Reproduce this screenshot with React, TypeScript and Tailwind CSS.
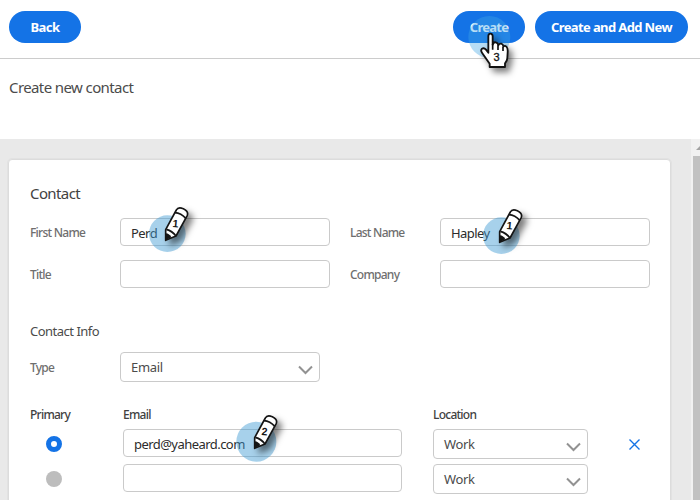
import React from "react";

type Box = { className?: string; children?: React.ReactNode };

function Label({ className = "text-[#6e6e6e]", children }: Box) {
  return (
    <span className={`relative top-px text-[12px] leading-4 font-medium tracking-[-0.75px] whitespace-nowrap ${className}`}>
      {children}
    </span>
  );
}

function Field({ className = "", children }: Box) {
  return (
    <div className={`flex h-7 items-center rounded border border-[#cacaca] bg-white pt-[3px] pl-[10px] text-[13px] tracking-[-0.55px] whitespace-nowrap text-[#2c2c2c] ${className}`}>
      {children}
    </div>
  );
}

function Select({ className = "", children }: Box) {
  return (
    <div className={`flex h-[30px] items-center justify-between rounded border border-[#cacaca] bg-white pr-[6px] pl-[10px] text-[13px] tracking-[-0.35px] text-[#4b4b4b] ${className}`}>
      <span className="pt-[2px]">{children}</span>
      <svg className="mt-[5px] h-[10px] w-[15px]" viewBox="0 0 15 10" fill="none" stroke="#929292" strokeWidth="2">
        <path d="M1 1.5 7.5 8 14 1.5" />
      </svg>
    </div>
  );
}

function Pencil({ n, r = 55, className }: { n: string; r?: number; className: string }) {
  return (
    <svg className={`absolute h-[70px] w-[70px] overflow-visible ${className}`} viewBox="0 0 210 210">
      <circle cx="55" cy="101" r={r} fill="#3c98d2" fillOpacity=".45" />
      <g className="drop-shadow-[14px_14px_9px_rgba(0,0,0,.5)]">
        <path d="M50 121 50 89 82 30Q87 20 103 26 119 33 115 46L81 108Z" fill="#fff" stroke="#151515" strokeWidth="5" strokeLinejoin="round" />
        <path d="M78 38Q96 39 111 56M52 88Q70 93 81 108" fill="none" stroke="#151515" strokeWidth="5" />
        <path d="M50 121 50 100Q62 101 67 112Z" fill="#151515" />
      </g>
      <text x="80" y="82" textAnchor="middle" fontSize="32" fontWeight="700" fill="#151515" transform="rotate(5 80 70)" className="font-['Liberation_Sans',sans-serif]">{n}</text>
    </svg>
  );
}

function Pointer() {
  return (
    <svg className="absolute top-0 left-[440px] h-[110px] w-[100px] overflow-visible" viewBox="0 0 300 330">
      <circle cx="148" cy="111" r="63" fill="#3fa6e4" fillOpacity=".38" />
      <g className="drop-shadow-[12px_13px_9px_rgba(0,0,0,.5)]">
        <path d="M151 101Q158 101 158 109V134Q160 126 167 127 174 128 175 136 178 130 184 131 190 133 190 140 195 135 200 141 204 146 203 157L202 174Q202 182 195 190V201H149V191L126 158Q121 151 126 146 132 142 138 149L145 158V109Q145 101 151 101Z" fill="#fff" stroke="#111" strokeWidth="5.5" strokeLinejoin="round" />
        <path d="M158 132V149M174 136V150M189 141V153" stroke="#111" strokeWidth="5" />
      </g>
      <text x="170" y="184" textAnchor="middle" fontSize="33" fill="#111" stroke="#111" strokeWidth="1" className="font-['Liberation_Sans',sans-serif]">3</text>
    </svg>
  );
}

function Pill({ className = "", children }: Box) {
  return (
    <button className={`flex h-8 items-center justify-center rounded-full bg-[#1473e6] pt-px text-[13px] font-bold whitespace-nowrap text-white ${className}`}>
      {children}
    </button>
  );
}

export default function App() {
  return (
    <div className="relative flex h-[500px] w-[700px] flex-col overflow-hidden bg-white font-['Noto_Sans',sans-serif]">
      <header className="flex h-[59px] shrink-0 items-start border-b border-[#cccccc] pt-[11px] pr-3 pl-[9px]">
        <Pill className="w-[72px] tracking-[-0.5px]">Back</Pill>
        <Pill className="ml-auto w-[72px] tracking-[-0.75px]">Create</Pill>
        <Pill className="ml-[10px] w-[153px] tracking-[-0.62px]">Create and Add New</Pill>
      </header>
      <div className="h-20 shrink-0 pt-4 pl-[9px]">
        <h1 className="text-[15px] leading-6 font-normal tracking-[-0.6px] text-[#4b4b4b]">Create new contact</h1>
      </div>
      <div className="flex min-h-0 flex-1 bg-[#e9e9e9]">
        <main className="min-w-0 flex-1 pt-5 pr-5 pl-2">
          <section className="h-[360px] rounded-[4px] border border-[#dcdcdc] bg-white pl-[21px] outline outline-1 outline-[#e2e2e2]">
            <h2 className="pt-[21px] text-[15px] leading-6 font-normal tracking-[-0.6px] text-[#424242]">Contact</h2>
            <div className="mt-[13px] grid grid-cols-[90px_210px_20px_90px_210px] grid-rows-[28px_28px] items-center gap-y-[14px]">
              <Label>First Name</Label>
              <Field>Perd</Field>
              <span />
              <Label>Last Name</Label>
              <Field>Hapley</Field>
              <Label>Title</Label>
              <Field />
              <span />
              <Label>Company</Label>
              <Field />
            </div>
            <h3 className="mt-[33px] text-[13px] leading-5 tracking-[-0.5px] text-[#4b4b4b]">Contact Info</h3>
            <div className="mt-[11px] flex items-center">
              <Label className="w-[90px] text-[#6e6e6e]">Type</Label>
              <Select className="w-[200px]">Email</Select>
            </div>
            <div className="mt-[24px] grid grid-cols-[93px_310px_155px] leading-4">
              <Label className="text-[#3f3f3f]">Primary</Label>
              <Label className="text-[#3f3f3f]">Email</Label>
              <Label className="text-[#3f3f3f]">Location</Label>
            </div>
            <div className="mt-[7px] flex items-start">
              <span className="mt-[7px] ml-4 h-4 w-4 rounded-full border-[5px] border-[#1473e6] bg-white" />
              <Field className="ml-[61px] w-[279px]">perd@yaheard.com</Field>
              <Select className="ml-[31px] w-[155px]">Work</Select>
              <svg className="mt-[10px] ml-[41px] h-[11px] w-[11px]" viewBox="0 0 11 11" stroke="#1473e6" strokeWidth="1.4">
                <path d="M.5.5 10.5 10.5M10.5.5.5 10.5" />
              </svg>
            </div>
            <div className="mt-[5px] flex items-start">
              <span className="mt-[7px] ml-4 h-4 w-4 rounded-full bg-[#bdbdbd]" />
              <Field className="ml-[61px] w-[279px]" />
              <Select className="ml-[31px] w-[155px]">Work</Select>
            </div>
          </section>
        </main>
        <aside className="flex w-[9px] flex-col items-end bg-[#f1f1f1]">
          <svg className="h-[17px] w-[7px]" viewBox="0 0 7 17" fill="#a3a3a3">
            <path d="M3 11 7 7V11Z" />
          </svg>
          <div className="w-[7px] flex-1 bg-[#c1c1c1]" />
        </aside>
      </div>
      <Pencil n="1" className="top-[200px] left-[149px]" />
      <Pencil n="1" className="top-[202px] left-[483px]" />
      <Pencil n="2" r={60} className="top-[408px] left-[238px]" />
      <Pointer />
    </div>
  );
}
